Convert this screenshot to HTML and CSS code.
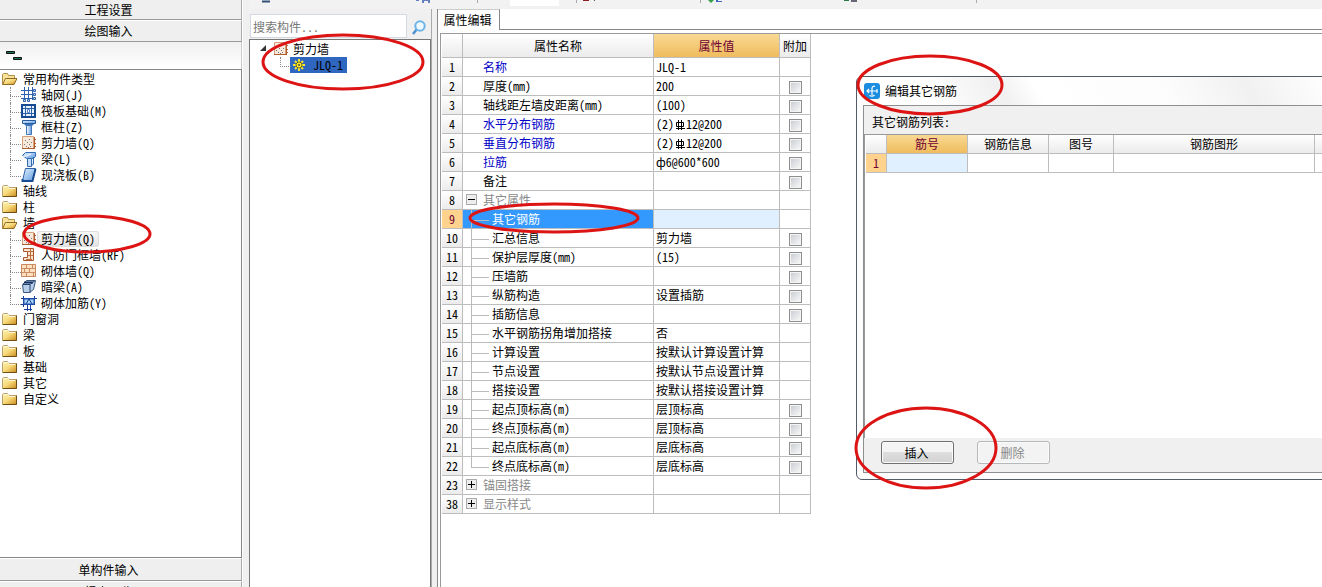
FILE: index.html
```html
<!DOCTYPE html>
<html lang="zh-CN">
<head>
<meta charset="utf-8">
<title>属性编辑</title>
<link rel="stylesheet" href="styles.css">
</head>
<body>
<svg class="defs" aria-hidden="true">
  <defs>
    <linearGradient id="gold" x1="0" y1="0" x2="1" y2="1"><stop offset="0" stop-color="#fff6c0"/><stop offset=".5" stop-color="#f6d878"/><stop offset="1" stop-color="#c98a1c"/></linearGradient>
    <linearGradient id="blue" x1="0" y1="0" x2="1" y2="1"><stop offset="0" stop-color="#e4f2fd"/><stop offset="1" stop-color="#5c9be0"/></linearGradient>
    <linearGradient id="column" x1="0" y1="0" x2="1" y2="0"><stop offset="0" stop-color="#fff"/><stop offset="1" stop-color="#5f9ae0"/></linearGradient>
    <symbol id="folder" viewBox="0 0 16 16"><path d="M1.500 13.500V3.500l1-1h4l1 2h8v9z" fill="url(#gold)" stroke="#b9a36b"/><path d="M2 13.500h13.500v-9" fill="none" stroke="#6e4d16"/><path d="M2 3.500h5l1 2h6" fill="none" stroke="#fdf6d0"/></symbol>
    <symbol id="open" viewBox="0 0 16 16"><path d="M1.500 13.500v-10l1-1h4l1 2h6v3" fill="#f8e29a" stroke="#b08f45"/><path d="M1.500 13.500l3-6h11.500l-3 6z" fill="url(#gold)" stroke="#8e6a22"/></symbol>
    <symbol id="grid" viewBox="0 0 16 16"><path d="M0 3.500h13M0 7.500h13M0 11.500h13M3.500 0v13M7.500 0v13M11.500 0v13" stroke="#2f63ad" fill="none"/><path d="M12.500 2.500h2v2h-2zM12.500 6.500h2v2h-2zM12.500 10.500h2v2h-2zM2.500 12.500h2v2h-2zM6.500 12.500h2v2h-2z" fill="#c5d9f1" stroke="#2f63ad"/></symbol>
    <symbol id="raft" viewBox="0 0 16 16"><path d="M1 2h13v12H1z" fill="#e9f2fc" stroke="#164a91" stroke-width="2"/><path d="M2 5.500h11M2 10.500h11M4.500 3v10M10.500 3v10" stroke="#2860ac"/><path d="M6.500 6.500h2v3h-2z" fill="#fff" stroke="#5283c4"/></symbol>
    <symbol id="pillar" viewBox="0 0 16 16"><path d="M1.500 1.500h13v3h-13z" fill="url(#blue)" stroke="#28589e"/><path d="M3 5h10l-2 2H5z" fill="#3974bf"/><path d="M5.500 6.500h5v9h-5z" fill="url(#column)" stroke="#4175b6"/></symbol>
    <symbol id="wall" viewBox="0 0 16 16"><path d="M1.500 1.500h11v12h-11z" fill="#f7eadd" stroke="#d5a078"/><path d="M1 13.500h13M13.500 2v11M13 4.500h2M13 8.500h2M13 11.500h2" stroke="#b05e2f" fill="none"/><path d="M4 5h1v1H4zM8 4h1v1H8zM6 7h1v1H6zM10 7h1v1h-1zM3 9h1v1H3zM5 11h1v1H5zM8 9h1v1H8zM9 11h1v1H9zM7 12h1v1H7z" fill="#777"/></symbol>
    <symbol id="beam" viewBox="0 0 16 16"><path d="M1.500 4.500l3-3h10v4l-2 2h-7z" fill="url(#blue)" stroke="#316cb2"/><path d="M6.500 7.500h4v8h-4zM12.500 6v7l-2 2" fill="#c5ddf8" stroke="#316cb2"/><path d="M2 6l8-3" stroke="#fff"/></symbol>
    <symbol id="slab" viewBox="0 0 16 16"><path d="M4.500 1.500h10l-3 12h-10z" fill="url(#blue)" stroke="#2b61ad"/><path d="M1.500 12v2h10l3-12" fill="none" stroke="#194b91" stroke-width="2"/></symbol>
    <symbol id="door" viewBox="0 0 16 16"><path d="M2.500 1.500h10v12h-10v-3h4v-6h-4z" fill="#fae3cd" stroke="#ae562b"/><path d="M9.500 2v11M7 4.500h5M7 8.500h5M5 12.500h6" stroke="#c06d3d"/></symbol>
    <symbol id="brick" viewBox="0 0 16 16"><path d="M.500 1.500h14v12H.500z" fill="#ffe0c0" stroke="#c9885e"/><path d="M1 5.500h14M1 9.500h14M5.500 2v3M11.500 2v3M8.500 6v3M3.500 6v3M5.500 10v3M12.500 10v3" stroke="#cd8d64"/></symbol>
    <symbol id="hidden" viewBox="0 0 16 16"><path d="M1.500 5.500l4-4h9l-2 9-4 3h-6z" fill="#b8cfe9" stroke="#39557d"/><path d="M2 5.500h7l5-4M9 6v8" fill="none" stroke="#24436f"/><path d="M3 3.500h9" stroke="#16305c" stroke-width="2"/></symbol>
    <symbol id="rebar" viewBox="0 0 16 16"><path d="M0 3.500h16M0 9.500h14M2.500 1v11M13.500 1v9M6.500 3v13M9.500 3v13M3 14.500h8" stroke="#173e9a" fill="none"/><path d="M3 4h10v5H3z" fill="#a5d2f5" stroke="#275ab5"/><path d="M5 9l3-5 3 5" stroke="#173e9a" fill="none"/></symbol>
  </defs>
</svg>
<div class="app">
  <aside class="nav">
    <button class="bar first">工程设置</button>
    <button class="bar">绘图输入</button>
    <div class="tools"><svg width="20" height="12" viewBox="0 0 20 12"><path d="M.5.500h8v2h-8zM7.500 6.500h8v2h-8z" fill="#17765e" stroke="#111"/></svg></div>
    <ul class="tree">
      <li><svg class="ic"><use href="#open"/></svg><span>常用构件类型</span>
        <ul>
          <li><svg class="ic"><use href="#grid"/></svg><span>轴网(J)</span></li>
          <li><svg class="ic"><use href="#raft"/></svg><span>筏板基础(M)</span></li>
          <li><svg class="ic"><use href="#pillar"/></svg><span>框柱(Z)</span></li>
          <li><svg class="ic"><use href="#wall"/></svg><span>剪力墙(Q)</span></li>
          <li><svg class="ic"><use href="#beam"/></svg><span>梁(L)</span></li>
          <li><svg class="ic"><use href="#slab"/></svg><span>现浇板(B)</span></li>
        </ul></li>
      <li><svg class="ic"><use href="#folder"/></svg><span>轴线</span></li>
      <li><svg class="ic"><use href="#folder"/></svg><span>柱</span></li>
      <li><svg class="ic"><use href="#open"/></svg><span>墙</span>
        <ul>
          <li><svg class="ic"><use href="#wall"/></svg><span class="current">剪力墙(Q)</span></li>
          <li><svg class="ic"><use href="#door"/></svg><span>人防门框墙(RF)</span></li>
          <li><svg class="ic"><use href="#brick"/></svg><span>砌体墙(Q)</span></li>
          <li><svg class="ic"><use href="#hidden"/></svg><span>暗梁(A)</span></li>
          <li><svg class="ic"><use href="#rebar"/></svg><span>砌体加筋(Y)</span></li>
        </ul></li>
      <li><svg class="ic"><use href="#folder"/></svg><span>门窗洞</span></li>
      <li><svg class="ic"><use href="#folder"/></svg><span>梁</span></li>
      <li><svg class="ic"><use href="#folder"/></svg><span>板</span></li>
      <li><svg class="ic"><use href="#folder"/></svg><span>基础</span></li>
      <li><svg class="ic"><use href="#folder"/></svg><span>其它</span></li>
      <li><svg class="ic"><use href="#folder"/></svg><span>自定义</span></li>
    </ul>
    <button class="bar bottom">单构件输入</button>
    <button class="bar last">报表预览</button>
  </aside>

  <div class="work">
    <div class="strip">
      <svg width="760" height="9" viewBox="0 0 760 9"><path d="M13 1.500h8" stroke="#34507c" stroke-width="2"/><path d="M167 0h3v1h-3zM173 0h2v3h-2zM179 0h2v3h-2zM173 0h8v1h-8z" fill="#6480bd"/><path d="M261 0h49v6h-49z" fill="#fff"/><path d="M228.500 0v3M327.500 0v3M451.500 0v3M727.500 0v3" stroke="#aaa"/><path d="M334 0h6v1h-6z" fill="#8b2020"/><path d="M345 0h1v1h-1z" fill="#555"/><path d="M459 0h6l-3 3z" fill="#35a047"/><path d="M467 0h2v1h4v1h-6z" fill="#3868c0"/><path d="M595 0h5v1h-5z" fill="#2a7a4d"/><path d="M602 0h6v2h-6z" fill="#667"/></svg>
    </div>
    <div class="panes">
      <section class="parts">
        <div class="search"><input type="text" placeholder="搜索构件..." aria-label="搜索构件"><button aria-label="搜索"><svg width="14" height="15" viewBox="0 0 14 15"><path d="M5 9l-4 5" stroke="#4d91d0" stroke-width="2.500"/><circle cx="8" cy="6" r="4.700" fill="#eef8ff" stroke="#6db4e8" stroke-width="2"/></svg></button></div>
        <ul class="list">
          <li><svg class="arrow" width="7" height="7" viewBox="0 0 7 7"><path d="M6 0v6H0z" fill="#333"/></svg><svg class="ic"><use href="#wall"/></svg><span>剪力墙</span>
            <ul><li><span class="chosen"><svg width="12" height="12" viewBox="0 0 12 12"><path d="M6 0v12M0 6h12M2 2l8 8M10 2l-8 8" stroke="#ffe92c" stroke-width="2"/><circle cx="6" cy="6" r="3" fill="#ffe92c" stroke="#6b6616"/><circle cx="6" cy="6" r="1" fill="#444"/></svg>JLQ-1</span></li></ul></li>
        </ul>
      </section>
      <section class="editor">
        <div class="tabs"><button class="tab">属性编辑</button></div>
        <div class="sheet">
          <table class="grid props">
            <colgroup><col class="c-no"><col class="c-name"><col class="c-value"><col class="c-add"></colgroup>
            <thead><tr><th></th><th>属性名称</th><th class="hot">属性值</th><th>附加</th></tr></thead>
            <tbody>
              <tr><th>1</th><td class="key">名称</td><td>JLQ-1</td><td></td></tr>
              <tr><th>2</th><td>厚度(mm)</td><td>200</td><td><input type="checkbox" aria-label="附加 厚度"></td></tr>
              <tr><th>3</th><td>轴线距左墙皮距离(mm)</td><td>(100)</td><td><input type="checkbox" aria-label="附加 轴线距左墙皮距离"></td></tr>
              <tr><th>4</th><td class="key">水平分布钢筋</td><td>(2)<svg class="bar-mark" viewBox="0 0 12 12" role="img" aria-label="三级钢"><path d="M2.500 3.500h7v4h-7zM4.500 1v10M7.500 1v10M2 9.500h9" fill="none" stroke="#000"/></svg>12@200</td><td><input type="checkbox" aria-label="附加 水平分布钢筋"></td></tr>
              <tr><th>5</th><td class="key">垂直分布钢筋</td><td>(2)<svg class="bar-mark" viewBox="0 0 12 12" role="img" aria-label="三级钢"><path d="M2.500 3.500h7v4h-7zM4.500 1v10M7.500 1v10M2 9.500h9" fill="none" stroke="#000"/></svg>12@200</td><td><input type="checkbox" aria-label="附加 垂直分布钢筋"></td></tr>
              <tr><th>6</th><td class="key">拉筋</td><td>ф6@600*600</td><td><input type="checkbox" aria-label="附加 拉筋"></td></tr>
              <tr><th>7</th><td>备注</td><td></td><td><input type="checkbox" aria-label="附加 备注"></td></tr>
              <tr><th>8</th><td class="group"><button class="fold minus" aria-label="折叠"></button>其它属性</td><td></td><td></td></tr>
              <tr class="active"><th>9</th><td class="sub">其它钢筋</td><td></td><td></td></tr>
              <tr><th>10</th><td class="sub">汇总信息</td><td>剪力墙</td><td><input type="checkbox" aria-label="附加 汇总信息"></td></tr>
              <tr><th>11</th><td class="sub">保护层厚度(mm)</td><td>(15)</td><td><input type="checkbox" aria-label="附加 保护层厚度"></td></tr>
              <tr><th>12</th><td class="sub">压墙筋</td><td></td><td><input type="checkbox" aria-label="附加 压墙筋"></td></tr>
              <tr><th>13</th><td class="sub">纵筋构造</td><td>设置插筋</td><td><input type="checkbox" aria-label="附加 纵筋构造"></td></tr>
              <tr><th>14</th><td class="sub">插筋信息</td><td></td><td><input type="checkbox" aria-label="附加 插筋信息"></td></tr>
              <tr><th>15</th><td class="sub">水平钢筋拐角增加搭接</td><td>否</td><td></td></tr>
              <tr><th>16</th><td class="sub">计算设置</td><td>按默认计算设置计算</td><td></td></tr>
              <tr><th>17</th><td class="sub">节点设置</td><td>按默认节点设置计算</td><td></td></tr>
              <tr><th>18</th><td class="sub">搭接设置</td><td>按默认搭接设置计算</td><td></td></tr>
              <tr><th>19</th><td class="sub">起点顶标高(m)</td><td>层顶标高</td><td><input type="checkbox" aria-label="附加 起点顶标高"></td></tr>
              <tr><th>20</th><td class="sub">终点顶标高(m)</td><td>层顶标高</td><td><input type="checkbox" aria-label="附加 终点顶标高"></td></tr>
              <tr><th>21</th><td class="sub">起点底标高(m)</td><td>层底标高</td><td><input type="checkbox" aria-label="附加 起点底标高"></td></tr>
              <tr><th>22</th><td class="sub end">终点底标高(m)</td><td>层底标高</td><td><input type="checkbox" aria-label="附加 终点底标高"></td></tr>
              <tr><th>23</th><td class="group"><button class="fold plus" aria-label="展开"></button>锚固搭接</td><td></td><td></td></tr>
              <tr><th>38</th><td class="group"><button class="fold plus" aria-label="展开"></button>显示样式</td><td></td><td></td></tr>
            </tbody>
          </table>
        </div>
      </section>
    </div>
  </div>

  <div class="dialog" role="dialog" aria-label="编辑其它钢筋">
    <header class="title"><svg width="16" height="16" viewBox="0 0 16 16"><rect width="16" height="16" rx="3" fill="#1a8de0"/><path d="M8 12V5a2 2 0 0 1 3-1.500M3 8h10M5 6L3 8l2 2M5.500 12.500q3 1.500 5-.500M13 6v4" fill="none" stroke="#fff" stroke-width="1.200"/></svg>编辑其它钢筋</header>
    <div class="frame">
      <div class="caption">其它钢筋列表:</div>
      <div class="bars">
        <table class="grid">
          <colgroup><col class="d-no"><col class="d-mark"><col class="d-info"><col class="d-fig"><col class="d-shape"><col></colgroup>
          <thead><tr><th></th><th class="hot">筋号</th><th>钢筋信息</th><th>图号</th><th>钢筋图形</th><th></th></tr></thead>
          <tbody><tr class="active"><th>1</th><td></td><td></td><td></td><td></td><td></td></tr></tbody>
        </table>
      </div>
      <footer class="actions"><button class="push">插入</button><button class="push" disabled>删除</button></footer>
    </div>
  </div>

  <svg class="marks" width="1322" height="587" aria-hidden="true"><g fill="none" stroke="#dc1414" stroke-width="3"><ellipse cx="343" cy="62" rx="80" ry="27"/><ellipse cx="87" cy="234" rx="63" ry="18"/><ellipse cx="554" cy="218" rx="84" ry="14"/><ellipse cx="930" cy="85" rx="72" ry="29"/><ellipse cx="926" cy="448" rx="70" ry="40"/></g></svg>
</div>
</body>
</html>
```

FILE: styles.css
```css
* { box-sizing: border-box; }
body { margin: 0; }
body, button, input { font-family: "Noto Sans CJK SC", "Liberation Sans", sans-serif; font-size: 12px; line-height: 16px; color: #000; font-feature-settings: "hwid"; }
button { padding: 0; border: 0; background: none; }
ul { list-style: none; margin: 0; padding: 0; }
.defs { position: absolute; width: 0; height: 0; }
.app { position: relative; display: flex; height: 100vh; overflow: hidden; background: #f0f0f0; }

/* module navigation */
.nav { display: flex; flex-direction: column; flex: 0 0 243px; border-right: 1px solid #fff; }
.bar { flex: none; height: 22px; padding-right: 24px; background: #efefef; border-top: 1px solid #fff; border-right: 1px solid #aaa; border-bottom: 1px solid #999; text-align: center; }
.first { height: 20px; border-top: 0; }
.bottom { height: 23px; }
.last { margin-bottom: -16px; }
.tools { flex: none; height: 27px; padding: 9px 6px; background: linear-gradient(#f0f0f0, #fff); border-right: 1px solid #ccc; }
.tools svg { display: block; }
.tree { flex: 1; min-height: 0; padding-top: 1px; background: #fff; border: solid #868686; border-width: 1px 1px 1px 0; overflow: hidden; white-space: nowrap; }
.ic { width: 16px; height: 16px; vertical-align: top; }
.tree > li { padding-left: 1px; }
.tree > li > span { padding-left: 6px; }
.tree ul { padding-left: 9px; }
.tree ul li { position: relative; height: 16px; padding-left: 11px; }
.tree ul li::before, .list ul li::before { content: ""; position: absolute; left: 0; top: 0; width: 10px; height: 9px; border: dotted #888; border-width: 0 0 1px 1px; }
.tree ul li:not(:last-child)::after { content: ""; position: absolute; left: 0; top: 8px; height: 8px; border-left: 1px dotted #888; }
.tree ul span { display: inline-block; height: 16px; padding: 0 4px; }
.current { border-radius: 3px; background: linear-gradient(#fafafa, #e2e2e2); box-shadow: inset 0 0 0 1px #ddd; }

/* working area */
.work { flex: 1; min-width: 0; display: flex; flex-direction: column; padding-left: 6px; }
.strip { flex: none; height: 9px; background: #f2f2f2; }
.strip svg { display: block; }
.panes { flex: 1; min-height: 0; display: flex; gap: 5px; }
.parts { flex: 0 0 183px; display: flex; flex-direction: column; border-right: 1px solid #aaa; }
.search { flex: none; display: flex; height: 30px; padding: 5px 0 1px 1px; }
.search input { width: 157px; height: 24px; padding: 0 2px; border: 1px solid #d4d8e0; background: #fff; }
.search input::placeholder { color: #777; opacity: 1; }
.search button { flex: 1; height: 24px; }
.search svg { vertical-align: middle; }
.list { flex: 1; padding: 1px 0 0 10px; background: #fff; border: solid #777; border-width: 1px 1px 0 1px; }
.list > li > span { padding-left: 4px; }
.arrow { margin: 4px 6px 0 0; vertical-align: top; }
.list ul { padding-left: 20px; }
.list ul li { position: relative; padding-left: 10px; }
.chosen { display: inline-flex; align-items: center; gap: 8px; height: 16px; padding: 0 4px 0 3px; background: #2f66c0; vertical-align: top; }
.editor { flex: 1; min-width: 0; display: flex; flex-direction: column; background: #fff; border-left: 1px solid #888; }
.tabs { flex: none; display: flex; height: 21px; }
.tabs::after { content: ""; flex: 1; border-bottom: 1px solid #888; }
.tab { width: 62px; padding-right: 2px; border-right: 1px solid #888; border-top: 1px solid #ccc; }
.sheet { flex: 1; margin: 3px 0 0 2px; border: solid #999; border-width: 1px 0 0 1px; padding-left: 1px; }

/* data grids */
.grid { table-layout: fixed; border-collapse: separate; border-spacing: 0; }
.grid th, .grid td { height: 19px; padding: 0; border: solid #bdbdbd; border-width: 0 1px 1px 0; font-weight: normal; line-height: 18px; white-space: nowrap; }
.grid th { background: linear-gradient(#fff, #ebebeb); text-align: center; }
.grid td { padding-left: 2px; background: #fff; }
.grid thead .hot { background: linear-gradient(#f9d994, #efbc5c); color: #700034; }
.grid .active th { background: #ffd38e; color: #700034; }
.grid .active td:nth-child(3) { background: #e0f0ff; }
.props { width: 369px; }
.props thead th { height: 24px; }
.props td:nth-child(2) { padding-left: 20px; }
.props td:last-child { padding: 0; text-align: center; }
.c-no { width: 21px; } .c-name { width: 191px; } .c-value { width: 126px; } .c-add { width: 31px; }
.grid .key { color: #0000c8; }
.grid .group { position: relative; color: #888; }
.grid .sub { position: relative; }
.props .sub:nth-child(2) { padding-left: 29px; }
.sub::before { content: ""; position: absolute; left: 8px; top: 0; width: 17px; height: 10px; border: solid #bbb; border-width: 0 0 1px 1px; }
.sub:not(.end)::after { content: ""; position: absolute; left: 8px; top: 9px; height: 10px; border-left: 1px solid #bbb; }
.props .active .sub { background: #3399ff; color: #fff; }
.fold { position: absolute; left: 3px; top: 3px; width: 11px; height: 11px; border: 1px solid #aaa; background: linear-gradient(#000, #000) center / 7px 1px no-repeat, #eee; }
.plus { background: linear-gradient(#000, #000) center / 7px 1px no-repeat, linear-gradient(#000, #000) center / 1px 7px no-repeat, #eee; }
.bar-mark { width: 12px; height: 12px; vertical-align: -2px; }
input[type="checkbox"] { appearance: none; width: 13px; height: 13px; margin: 0; border: 1px solid #8e8f8f; background: linear-gradient(135deg, #cbcfd5, #f6f6f6) content-box #fff; padding: 1px; vertical-align: middle; box-shadow: inset 0 0 0 1px #f4f4f4; }

/* floating window */
.dialog { position: absolute; left: 856px; right: -8px; top: 76px; height: 404px; display: flex; flex-direction: column; padding: 0 0 6px 6px; border: 1px solid #555b66; border-radius: 6px; background: #fdfdfd; }
.title { flex: none; display: flex; align-items: center; gap: 5px; height: 28px; padding-left: 1px; background: linear-gradient(60deg, #fff 15%, #f0f0f0 30%, #fff 38%, #fcfcfc 65%, #f1f1f1 82%, #fff); }
.frame { flex: 1; display: flex; flex-direction: column; border: 1px solid #8f8f8f; background: #f0f0f0; }
.caption { flex: none; height: 28px; padding: 8px 8px 0; }
.bars { flex: 1; border: solid #999; border-width: 1px 0 0 1px; padding-left: 1px; background: #fff; }
.bars .grid { width: 100%; }
.d-no { width: 21px; } .d-mark { width: 81px; } .d-info { width: 81px; } .d-fig { width: 65px; } .d-shape { width: 201px; }
.bars .active td:nth-child(2) { background: #e0f0ff; }
.bars .active td:nth-child(3) { background: #fff; }
.actions { flex: none; display: flex; gap: 23px; height: 34px; padding: 3px 17px; }
.push { width: 73px; height: 23px; padding-right: 2px; border: 1px solid #707070; border-radius: 3px; background: linear-gradient(#f4f4f4 45%, #dedede 50%, #d2d2d2); box-shadow: inset 0 0 0 1px #fafafa; }
.push:disabled { border-color: #b5b8bb; background: #f3f3f3; color: #888; }

.marks { position: absolute; left: 0; top: 0; pointer-events: none; }
```
